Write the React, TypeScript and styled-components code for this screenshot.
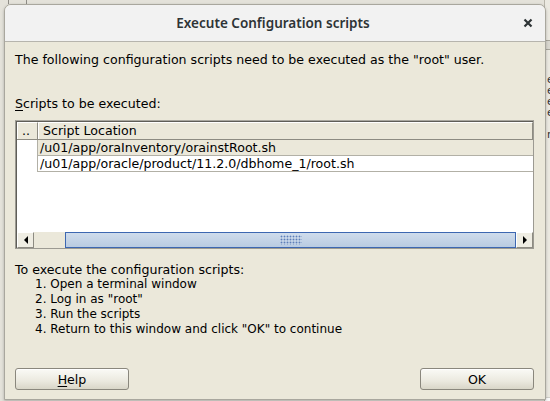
import React from 'react'
import styled, { createGlobalStyle } from 'styled-components'

const GlobalStyle = createGlobalStyle`
  html, body {
    margin: 0;
    padding: 0;
  }
  body {
    width: 550px;
    height: 401px;
    overflow: hidden;
    background: #e6e4dc;
    font-family: 'DejaVu Sans', sans-serif;
  }
`

const Desktop = styled.div`
  position: relative;
  width: 550px;
  height: 401px;
  overflow: hidden;
  background: #e4e2da;
`

// window peeking out behind the dialog, on the right
const BackWindow = styled.div`
  position: absolute;
  left: 544px;
  top: 0;
  width: 40px;
  height: 401px;
  background: #ebe9e1;
  border-left: 1px solid #b9b6ab;
`

const BackBar = styled.div`
  height: 8px;
  margin-top: 40px;
  background: #d9d7cf;
  border-top: 1px solid #a7a49a;
  border-bottom: 1px solid #a7a49a;
`

const BackText = styled.div`
  font-size: 11px;
  line-height: 11px;
  color: #333;
  padding: 24px 0 0 2px;
  white-space: pre;
`

const BackFooter = styled.div`
  position: absolute;
  left: 0;
  right: 0;
  bottom: 0;
  height: 3px;
  background: #fbfbfb;
  border-top: 1px solid #d0cfca;
`

const TopLine = styled.div`
  position: absolute;
  left: 8px;
  top: 0;
  width: 17px;
  height: 4px;
  border-left: 1px solid #8e8c86;
  border-right: 1px solid #8e8c86;
`

const Dialog = styled.div`
  position: absolute;
  left: 4px;
  top: 4px;
  width: 540px;
  height: 394px;
  display: flex;
  flex-direction: column;
  background: #ebe8da;
  border: 1px solid #a9a79e;
  border-radius: 7px 7px 0 0;
  box-shadow: 0 1px 3px rgba(0, 0, 0, 0.25);
  overflow: hidden;
`

const TitleBar = styled.div`
  position: relative;
  height: 36px;
  flex: none;
  display: flex;
  align-items: center;
  justify-content: center;
  background: #f2f2f2;
  border-bottom: 1px solid #b6b4ad;
`

const Title = styled.div`
  font-family: 'Noto Sans', sans-serif;
  font-weight: 600;
  font-size: 13.5px;
  color: #2e3436;
  padding-right: 4px;
`

const CloseButton = styled.div`
  position: absolute;
  right: 11px;
  top: 12px;
  width: 12px;
  height: 12px;
  display: flex;
  align-items: center;
  justify-content: center;
`

const Body = styled.div`
  flex: 1;
  display: flex;
  flex-direction: column;
  padding: 10px 10px 0 10px;
  font-size: 12.6px;
  color: #000;
`

const Line = styled.div`
  line-height: 15px;
  white-space: pre;
`

const Label = styled(Line)`
  margin-top: 29px;
`

const Mnemonic = styled.span`
  text-decoration: underline;
  text-underline-offset: 2px;
`

const Table = styled.div`
  margin-top: 9px;
  width: 517px;
  height: 127px;
  display: flex;
  flex-direction: column;
  border: 1px solid #9c9a92;
  border-top-color: #a9a79f;
  background: #fff;
`

const Viewport = styled.div`
  flex: 1;
  display: flex;
  flex-direction: column;
  border-left: 1px solid #5f5e58;
  border-top: 1px solid #5f5e58;
`

const Row = styled.div<{ $selected?: boolean }>`
  display: grid;
  grid-template-columns: 21px 1fr;
  height: 15px;
  background: ${p => (p.$selected ? '#ebe8da' : '#fff')};
  border-bottom: 1px solid #b2b0a6;
`

const HeaderRow = styled.div`
  display: grid;
  grid-template-columns: 21px 1fr;
  height: 17px;
  background: #ebe8da;
  border-bottom: 1px solid #8d8b82;
`

const HeaderCell = styled.div`
  line-height: 16px;
  padding-left: 4px;
  border-top: 1px solid #fff;
  border-left: 1px solid #fff;
  border-right: 1px solid #8d8b82;
  white-space: nowrap;
`

const Cell = styled.div<{ $blank?: boolean }>`
  line-height: 16px;
  padding-left: 2px;
  white-space: nowrap;
  background: ${p => (p.$blank ? '#fff' : 'transparent')};
  border-right: ${p => (p.$blank ? '1px solid #b2b0a6' : 'none')};
`

const Filler = styled.div`
  flex: 1;
`

const ScrollBar = styled.div`
  height: 16px;
  display: flex;
  border-top: 1px solid #fff;
  background: #ebe8da;
`

const ArrowButton = styled.div`
  width: 17px;
  flex: none;
  display: flex;
  align-items: center;
  justify-content: center;
  background: #efede3;
  border: 1px solid #8d8b82;
  border-top-color: #fff;
  border-left-color: #fff;
  box-sizing: border-box;
`

const Track = styled.div`
  flex: 1;
  display: flex;
  padding-left: 31px;
  background: #ebe8da;
`

const Thumb = styled.div`
  flex: 1;
  display: flex;
  align-items: center;
  justify-content: center;
  background: linear-gradient(#cfdcec, #b9cbe1);
  border: 1px solid #3d67b1;
  box-sizing: border-box;
`

const Grip = styled.div`
  width: 22px;
  height: 10px;
  background-image: radial-gradient(#5d7eb8 0.8px, transparent 1.1px);
  background-size: 3px 3px;
`

const Steps = styled.div`
  margin-top: 13px;
  display: flex;
  flex-direction: column;
`

const Step = styled(Line)`
  padding-left: 20px;
  font-size: 12px;
`

const Footer = styled.div`
  margin-top: auto;
  display: flex;
  justify-content: space-between;
  padding: 0 0 9px 0;
  width: 519px;
`

const Button = styled.div`
  width: 114px;
  height: 22px;
  box-sizing: border-box;
  display: flex;
  align-items: center;
  justify-content: center;
  border: 1px solid #8a877d;
  border-radius: 3px;
  background: linear-gradient(#fafaf6, #ebe9df 60%, #d9d6c8);
  box-shadow: inset 0 1px 0 #fff;
  font-size: 12.6px;
`

const ArrowLeft = () => (
  <svg width="4" height="8" viewBox="0 0 4 8">
    <polygon points="4,0 0,4 4,8" fill="#000" />
  </svg>
)

const ArrowRight = () => (
  <svg width="4" height="8" viewBox="0 0 4 8">
    <polygon points="0,0 4,4 0,8" fill="#000" />
  </svg>
)

const scripts = [
  '/u01/app/oraInventory/orainstRoot.sh',
  '/u01/app/oracle/product/11.2.0/dbhome_1/root.sh',
]

const steps = [
  '1. Open a terminal window',
  '2. Log in as "root"',
  '3. Run the scripts',
  '4. Return to this window and click "OK" to continue',
]

export default function App() {
  return (
    <Desktop>
      <GlobalStyle />
      <TopLine />
      <BackWindow>
        <BackBar />
        <BackText>{'ec\nec\nec\nec\n\nr'}</BackText>
        <BackFooter />
      </BackWindow>
      <Dialog>
        <TitleBar>
          <Title>Execute Configuration scripts</Title>
          <CloseButton>
            <svg width="10" height="10" viewBox="0 0 10 10">
              <path d="M1.5 1.5 L8.5 8.5 M8.5 1.5 L1.5 8.5" stroke="#2e3436" strokeWidth="2.2" />
            </svg>
          </CloseButton>
        </TitleBar>
        <Body>
          <Line>The following configuration scripts need to be executed as the "root" user.</Line>
          <Label>
            <Mnemonic>S</Mnemonic>cripts to be executed:
          </Label>
          <Table>
            <Viewport>
              <HeaderRow>
                <HeaderCell>..</HeaderCell>
                <HeaderCell>Script Location</HeaderCell>
              </HeaderRow>
              {scripts.map((s, i) => (
                <Row key={s} $selected={i === 0}>
                  <Cell $blank />
                  <Cell>{s}</Cell>
                </Row>
              ))}
              <Filler />
              <ScrollBar>
                <ArrowButton>
                  <ArrowLeft />
                </ArrowButton>
                <Track>
                  <Thumb>
                    <Grip />
                  </Thumb>
                </Track>
                <ArrowButton>
                  <ArrowRight />
                </ArrowButton>
              </ScrollBar>
            </Viewport>
          </Table>
          <Steps>
            <Line>To execute the configuration scripts:</Line>
            {steps.map(s => (
              <Step key={s}>{s}</Step>
            ))}
          </Steps>
          <Footer>
            <Button>
              <Mnemonic>H</Mnemonic>elp
            </Button>
            <Button>OK</Button>
          </Footer>
        </Body>
      </Dialog>
    </Desktop>
  )
}
